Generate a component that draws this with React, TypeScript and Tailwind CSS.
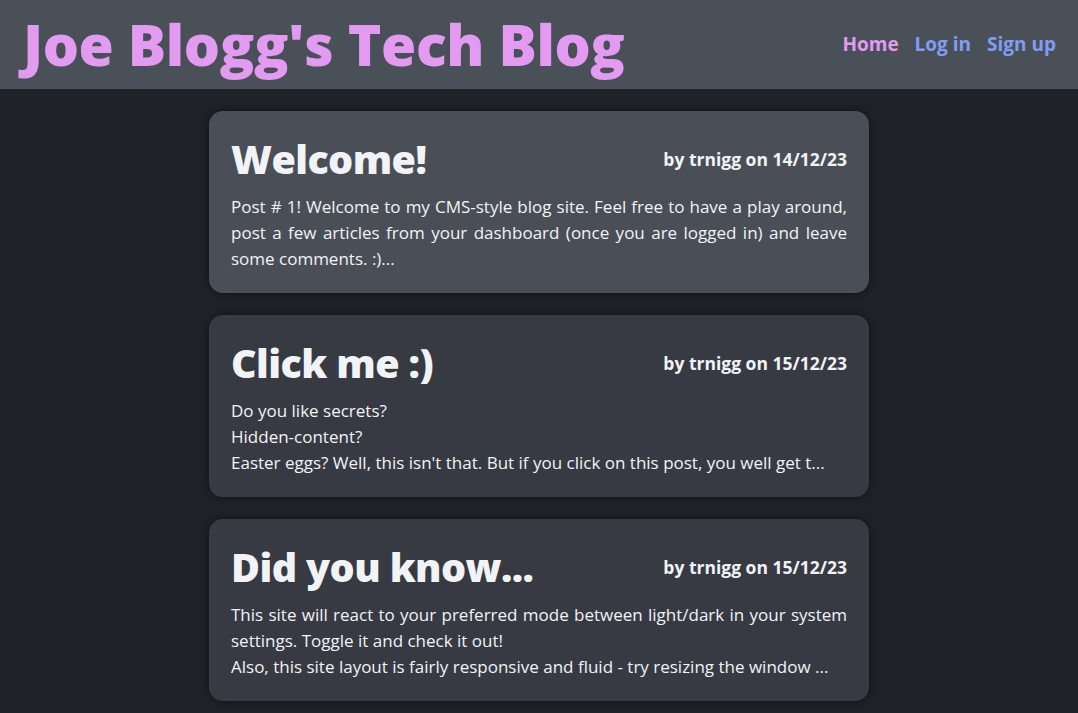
const posts = [
  {
    title: 'Welcome!',
    author: 'trnigg',
    date: '14/12/23',
    body: ['Post # 1! Welcome to my CMS-style blog site. Feel free to have a play around, post a few articles from your dashboard (once you are logged in) and leave some comments. :)...'],
    active: true,
  },
  {
    title: 'Click me :)',
    author: 'trnigg',
    date: '15/12/23',
    body: ['Do you like secrets?', 'Hidden-content?', "Easter eggs? Well, this isn't that. But if you click on this post, you well get t..."],
  },
  {
    title: 'Did you know...',
    author: 'trnigg',
    date: '15/12/23',
    body: [
      'This site will react to your preferred mode between light/dark in your system settings. Toggle it and check it out!',
      'Also, this site layout is fairly responsive and fluid - try resizing the window ...',
    ],
  },
];

const App = () => {
  return (
    <div className="min-h-screen bg-[#1f2226] font-['Open_Sans',sans-serif] text-[#f1f3f6]">
      <header className="flex h-[89px] items-center justify-between bg-[#4a5058] pl-[23px] pr-[22px]">
        <h1 className="text-[57px] font-extrabold tracking-[-0.4px] text-[#e29bf0]">Joe Blogg's Tech Blog</h1>
        <nav className="flex gap-[16px] text-[19px] font-bold">
          <a className="text-[#e29bf0]">Home</a>
          <a className="text-[#819cf5]">Log in</a>
          <a className="text-[#819cf5]">Sign up</a>
        </nav>
      </header>

      <main className="flex flex-col items-center gap-[22px] py-[22px]">
        {posts.map((post) => (
          <article
            key={post.title}
            className={`h-[182px] w-[660px] rounded-[14px] px-[22px] pt-[22px] shadow-[0_0_10px_rgba(0,0,0,0.45)] ${
              post.active ? 'bg-[#4a4f57]' : 'bg-[#373a42]'
            }`}
          >
            <div className="flex items-center justify-between">
              <h2 className="text-[39.5px] font-extrabold leading-[52px] tracking-[-0.6px]">{post.title}</h2>
              <p className="text-[17.5px] font-bold">
                by {post.author} on {post.date}
              </p>
            </div>
            <div className="mt-[9px] text-justify text-[17px] leading-[26px]">
              {post.body.map((line) => (
                <p key={line}>{line}</p>
              ))}
            </div>
          </article>
        ))}
      </main>
    </div>
  );
};

export default App;
